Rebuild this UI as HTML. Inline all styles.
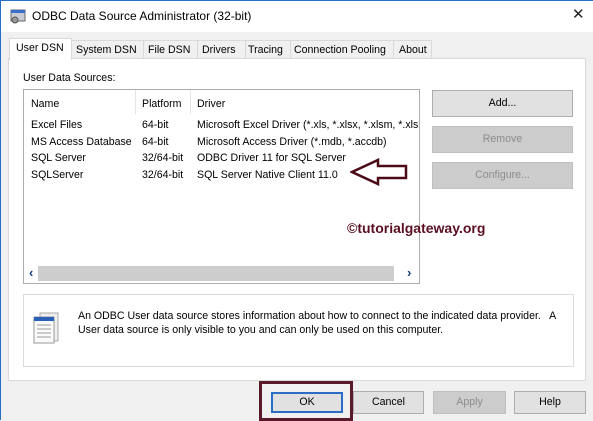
<!DOCTYPE html>
<html><head><style>
*{margin:0;padding:0;box-sizing:border-box}
body{width:593px;height:420px;background:#f0f0f0;font-family:"Liberation Sans",sans-serif;font-size:10.6px;color:#000;position:relative;overflow:hidden;border-left:1px solid #2b6cc4}
.a{position:absolute;white-space:nowrap}
.btn{position:absolute;border:1px solid #adadad;background:#e1e1e1;text-align:center;line-height:25px}
.dis{background:#cccccc;border-color:#bfbfbf;color:#8c8c8c}
.sep{position:absolute;top:40px;width:1px;height:18px;background:#d9d9d9}
</style></head><body>
<div class="a" style="left:0;top:0;width:593px;height:32px;background:#fff"></div>
<div class="a" style="left:0;top:0;width:593px;height:1px;background:#2b6cc4"></div>
<svg class="a" style="left:9px;top:8px" width="16" height="16"><rect x="1" y="2" width="14" height="11" fill="#c8ccd4" stroke="#666"/><rect x="1" y="2" width="14" height="3" fill="#3a6ec8"/><circle cx="5" cy="12" r="3" fill="#999" stroke="#555"/></svg>
<div class="a" style="left:31px;top:9px;font-size:12px">ODBC Data Source Administrator (32-bit)</div>
<div class="a" style="left:571px;top:5px;font-size:15px;color:#222">✕</div>
<div class="a" style="left:7px;top:58px;width:578px;height:323px;background:#fff;border:1px solid #d9d9d9"></div>
<div class="a" style="left:70px;top:40px;width:361px;height:19px;border:1px solid #d9d9d9;background:#f0f0f0"></div>
<div class="a" style="left:75px;top:44px">System DSN</div>
<div class="sep" style="left:142px"></div>
<div class="a" style="left:147px;top:44px">File DSN</div>
<div class="sep" style="left:196px"></div>
<div class="a" style="left:201px;top:44px">Drivers</div>
<div class="sep" style="left:244px"></div>
<div class="a" style="left:247px;top:44px">Tracing</div>
<div class="sep" style="left:289px"></div>
<div class="a" style="left:293px;top:44px">Connection Pooling</div>
<div class="sep" style="left:392px"></div>
<div class="a" style="left:398px;top:44px">About</div>
<div class="a" style="left:8px;top:38px;width:63px;height:22px;background:#fff;border:1px solid #d9d9d9;border-bottom:none"></div>
<div class="a" style="left:15px;top:42px">User DSN</div>
<div class="a" style="left:22px;top:72px">User Data Sources:</div>
<div class="a" style="left:22px;top:89px;width:397px;height:195px;border:1px solid #adadad;background:#fff"></div>
<div class="a" style="left:134px;top:90px;width:1px;height:24px;background:#e5e5e5"></div>
<div class="a" style="left:189px;top:90px;width:1px;height:24px;background:#e5e5e5"></div>
<div class="a" style="left:30px;top:98px">Name</div><div class="a" style="left:141px;top:98px">Platform</div><div class="a" style="left:196px;top:98px">Driver</div>
<div class="a" style="left:30px;top:119px">Excel Files</div><div class="a" style="left:141px;top:119px">64-bit</div><div class="a" style="left:196px;top:119px;width:221px;overflow:hidden">Microsoft Excel Driver (*.xls, *.xlsx, *.xlsm, *.xlsb</div>
<div class="a" style="left:30px;top:136px">MS Access Database</div><div class="a" style="left:141px;top:136px">64-bit</div><div class="a" style="left:196px;top:136px">Microsoft Access Driver (*.mdb, *.accdb)</div>
<div class="a" style="left:30px;top:152px">SQL Server</div><div class="a" style="left:141px;top:152px">32/64-bit</div><div class="a" style="left:196px;top:152px">ODBC Driver 11 for SQL Server</div>
<div class="a" style="left:30px;top:169px">SQLServer</div><div class="a" style="left:141px;top:169px">32/64-bit</div><div class="a" style="left:196px;top:169px">SQL Server Native Client 11.0</div>
<svg class="a" style="left:349px;top:158px" width="60" height="28"><path d="M2 14 L28 2 L28 8 L56 8 L56 20 L28 20 L28 26 Z" fill="none" stroke="#4a0a18" stroke-width="2.5"/></svg>
<div class="a" style="left:346px;top:220px;font-size:14px;font-weight:bold;color:#5a1020">©tutorialgateway.org</div>
<div class="a" style="left:37px;top:266px;width:356px;height:15px;background:#cdcdcd"></div>
<div class="a" style="left:28px;top:265px;font-size:13px;color:#1a3a8a;font-weight:bold">‹</div>
<div class="a" style="left:406px;top:265px;font-size:13px;color:#1a3a8a;font-weight:bold">›</div>
<div class="btn" style="left:431px;top:90px;width:141px;height:27px">Add...</div>
<div class="btn dis" style="left:431px;top:126px;width:141px;height:27px">Remove</div>
<div class="btn dis" style="left:431px;top:162px;width:141px;height:27px">Configure...</div>
<div class="a" style="left:22px;top:294px;width:551px;height:73px;border:1px solid #dcdcdc"></div>
<svg class="a" style="left:31px;top:311px" width="32" height="34"><rect x="8" y="2" width="18" height="28" fill="#eee" stroke="#aaa"/><rect x="2" y="6" width="20" height="26" fill="#fafafa" stroke="#999"/><rect x="2" y="6" width="20" height="4" fill="#2a5fb8"/><path d="M5 14h14M5 18h14M5 22h14M5 26h14" stroke="#999"/></svg>
<div class="a" style="left:77px;top:309px;line-height:14px">An ODBC User data source stores information about how to connect to the indicated data provider.&nbsp;&nbsp; A<br>User data source is only visible to you and can only be used on this computer.</div>
<div class="a" style="left:258px;top:381px;width:94px;height:40px;border:3px solid #5a1a2a"></div>
<div class="btn" style="left:270px;top:392px;width:72px;height:21px;line-height:17px;border:2px solid #2b6cc4">OK</div>
<div class="btn" style="left:352px;top:391px;width:71px;height:23px;line-height:21px">Cancel</div>
<div class="btn dis" style="left:432px;top:391px;width:73px;height:23px;line-height:21px">Apply</div>
<div class="btn" style="left:513px;top:391px;width:72px;height:23px;line-height:21px">Help</div>
</body></html>
